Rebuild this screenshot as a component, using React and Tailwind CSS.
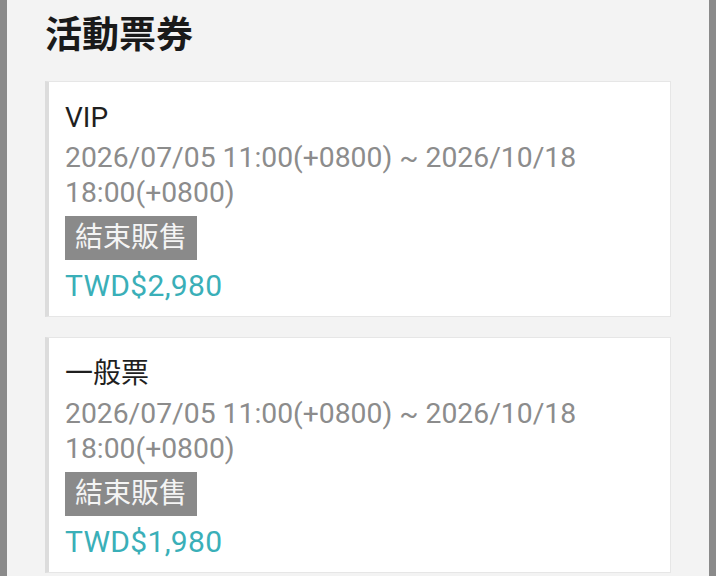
const tickets = [
  {
    name: "VIP",
    period: "2026/07/05 11:00(+0800) ~ 2026/10/18 18:00(+0800)",
    status: "結束販售",
    price: "TWD$2,980"
  },
  {
    name: "一般票",
    period: "2026/07/05 11:00(+0800) ~ 2026/10/18 18:00(+0800)",
    status: "結束販售",
    price: "TWD$1,980"
  }
];

const TicketCard = ({ ticket }) => (
  <div className="border border-[#e6e6e6] border-l-[4px] border-l-[#dcdcdc] bg-white pt-[13px] pr-4 pb-[13px] pl-[16px]">
    <p className="text-[28px] leading-[45px] text-[#1f1f1f]">{ticket.name}</p>
    <p className="text-[28.3px] leading-[35px] text-[#8c8c8c]">{ticket.period}</p>
    <span className="mt-[6px] inline-block bg-[#8a8a8a] px-[10px] py-[4px] text-[28px] leading-[36px] text-[#f4f4f4]">
      {ticket.status}
    </span>
    <p className="mt-[8px] text-[30px] leading-[35px] tracking-[0.3px] text-[#3aafb8]">{ticket.price}</p>
  </div>
);

export default function App() {
  return (
    <div
      className="flex h-[576px] w-[716px] overflow-hidden bg-[#f3f3f3]"
      style={{ fontFamily: 'Roboto, "Noto Sans CJK TC", sans-serif' }}
    >
      <div className="w-[7px] shrink-0 bg-[#8a8a8a]" />
      <div className="flex-1 px-[38px] pt-[12px]">
        <h1 className="text-[37px] font-bold leading-[48px] text-[#1a1a1a]">活動票券</h1>
        <div className="mt-[21px] flex flex-col gap-[20px]">
          {tickets.map((ticket) => (
            <TicketCard key={ticket.name} ticket={ticket} />
          ))}
        </div>
      </div>
      <div className="w-[7px] shrink-0 bg-[#8a8a8a]" />
    </div>
  );
}
